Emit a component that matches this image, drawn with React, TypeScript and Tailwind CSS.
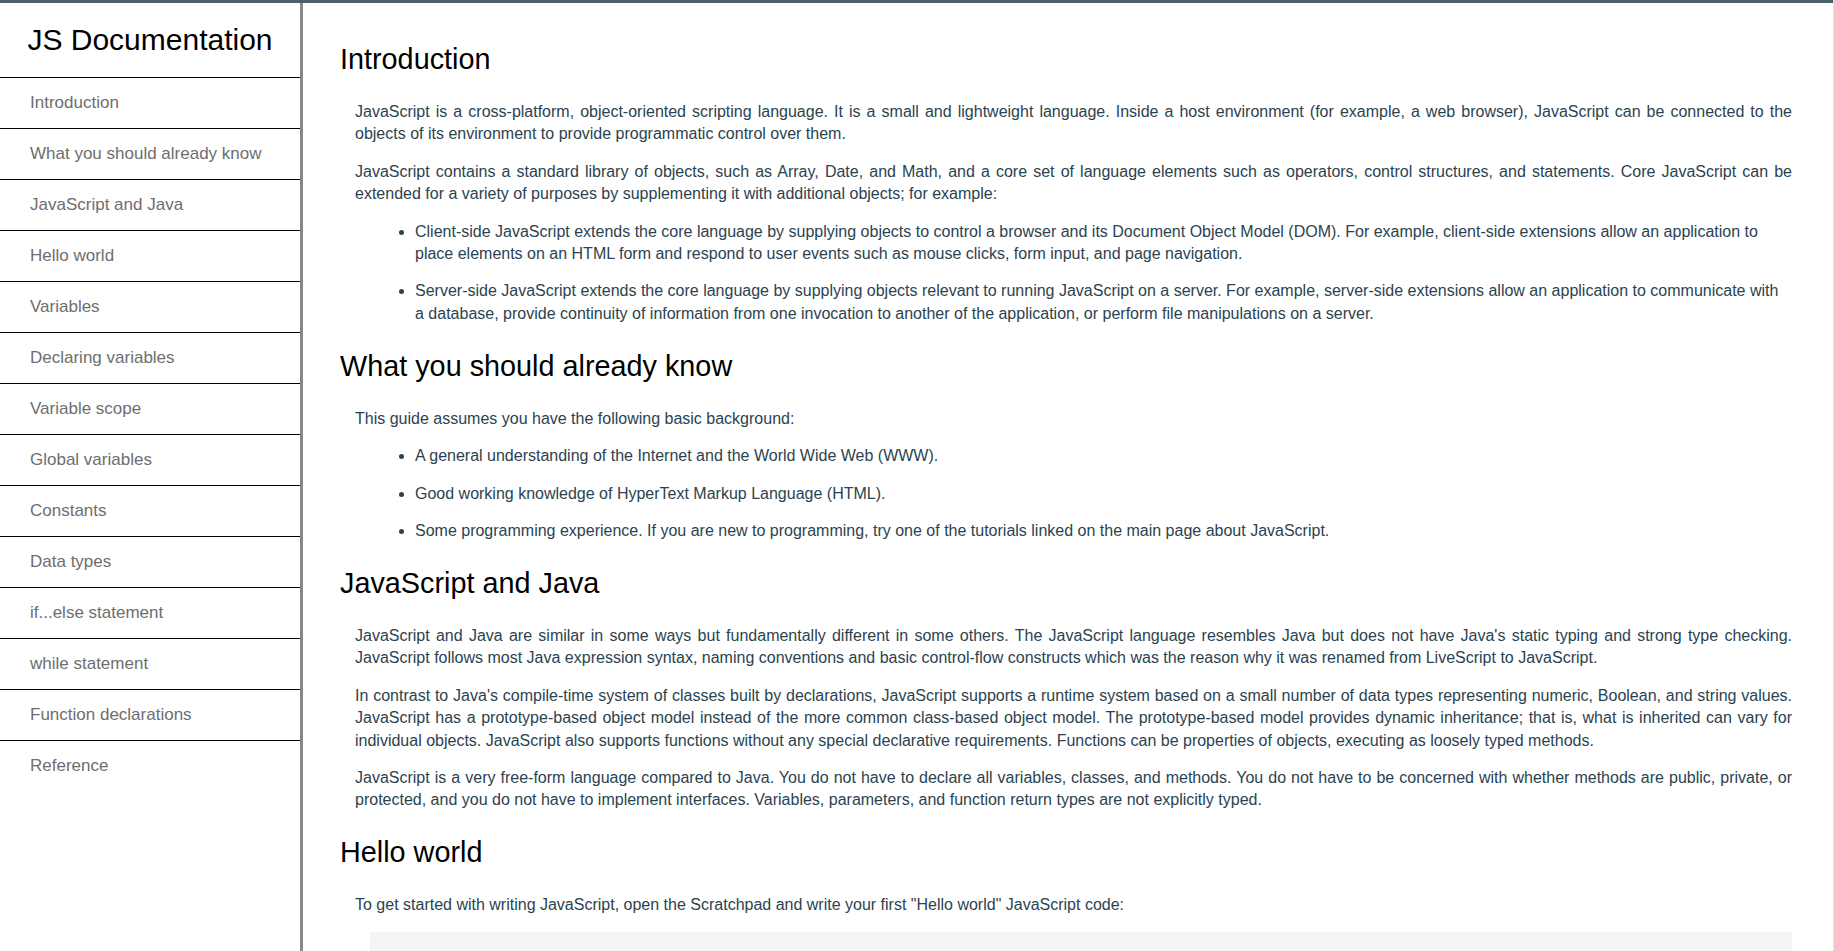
const navItems = [
  'Introduction',
  'What you should already know',
  'JavaScript and Java',
  'Hello world',
  'Variables',
  'Declaring variables',
  'Variable scope',
  'Global variables',
  'Constants',
  'Data types',
  'if...else statement',
  'while statement',
  'Function declarations',
  'Reference',
];

function Section({ title, children }: { title: string; children: React.ReactNode }) {
  return (
    <section className="pb-[23.5px]">
      <h2 className="text-[28.8px] leading-[35px] text-black mb-[24px]">{title}</h2>
      <div className="flex flex-col gap-[15px]">{children}</div>
    </section>
  );
}

function P({ children }: { children: React.ReactNode }) {
  return <p className="ml-[15px] text-justify">{children}</p>;
}

function List({ items }: { items: string[] }) {
  return (
    <ul className="ml-[15px] pl-[60px] pr-[8px] list-disc flex flex-col gap-[15px]">
      {items.map((t) => (
        <li key={t}>{t}</li>
      ))}
    </ul>
  );
}

export default function App() {
  return (
    <div
      className="h-screen overflow-hidden flex flex-col bg-white border-r border-[#e2e2e2]"
      style={{ fontFamily: '"Liberation Sans", Arial, sans-serif' }}
    >
      <div className="h-[3px] bg-[#4b5e6b] shrink-0" />
      <div className="flex flex-1 min-h-0">
        {/* Sidebar */}
        <nav className="w-[303px] shrink-0 border-r-[3px] border-[#888888] flex flex-col">
          <header className="h-[74px] flex items-center justify-center">
            <h1 className="text-[30px] text-black leading-none">JS Documentation</h1>
          </header>
          <ul>
            {navItems.map((item) => (
              <li
                key={item}
                className="h-[51px] border-t border-black flex items-center pl-[30px] text-[17px] text-[#6e6e6e]"
              >
                {item}
              </li>
            ))}
          </ul>
        </nav>

        {/* Main */}
        <main className="flex-1 min-w-0 pt-[39px] pl-[37px] pr-[41px] text-[16px] leading-[22.4px] text-[#2b4350]">
          <Section title="Introduction">
            <P>
              JavaScript is a cross-platform, object-oriented scripting language. It is a small and lightweight
              language. Inside a host environment (for example, a web browser), JavaScript can be connected to the
              objects of its environment to provide programmatic control over them.
            </P>
            <P>
              JavaScript contains a standard library of objects, such as Array, Date, and Math, and a core set of
              language elements such as operators, control structures, and statements. Core JavaScript can be
              extended for a variety of purposes by supplementing it with additional objects; for example:
            </P>
            <List
              items={[
                'Client-side JavaScript extends the core language by supplying objects to control a browser and its Document Object Model (DOM). For example, client-side extensions allow an application to place elements on an HTML form and respond to user events such as mouse clicks, form input, and page navigation.',
                'Server-side JavaScript extends the core language by supplying objects relevant to running JavaScript on a server. For example, server-side extensions allow an application to communicate with a database, provide continuity of information from one invocation to another of the application, or perform file manipulations on a server.',
              ]}
            />
          </Section>

          <Section title="What you should already know">
            <P>This guide assumes you have the following basic background:</P>
            <List
              items={[
                'A general understanding of the Internet and the World Wide Web (WWW).',
                'Good working knowledge of HyperText Markup Language (HTML).',
                'Some programming experience. If you are new to programming, try one of the tutorials linked on the main page about JavaScript.',
              ]}
            />
          </Section>

          <Section title="JavaScript and Java">
            <P>
              JavaScript and Java are similar in some ways but fundamentally different in some others. The JavaScript
              language resembles Java but does not have Java's static typing and strong type checking. JavaScript
              follows most Java expression syntax, naming conventions and basic control-flow constructs which was the
              reason why it was renamed from LiveScript to JavaScript.
            </P>
            <P>
              In contrast to Java's compile-time system of classes built by declarations, JavaScript supports a
              runtime system based on a small number of data types representing numeric, Boolean, and string values.
              JavaScript has a prototype-based object model instead of the more common class-based object model. The
              prototype-based model provides dynamic inheritance; that is, what is inherited can vary for individual
              objects. JavaScript also supports functions without any special declarative requirements. Functions can
              be properties of objects, executing as loosely typed methods.
            </P>
            <P>
              JavaScript is a very free-form language compared to Java. You do not have to declare all variables,
              classes, and methods. You do not have to be concerned with whether methods are public, private, or
              protected, and you do not have to implement interfaces. Variables, parameters, and function return types
              are not explicitly typed.
            </P>
          </Section>

          <Section title="Hello world">
            <P>
              To get started with writing JavaScript, open the Scratchpad and write your first "Hello world"
              JavaScript code:
            </P>
            <pre className="ml-[30px] bg-[#f4f4f4] px-[20px] py-[30px] text-[15px] text-[#333] font-['Liberation_Mono',monospace]">
              {`function greetMe(yourName) { alert("Hello " + yourName); }

greetMe("World");`}
            </pre>
          </Section>
        </main>
      </div>
    </div>
  );
}
